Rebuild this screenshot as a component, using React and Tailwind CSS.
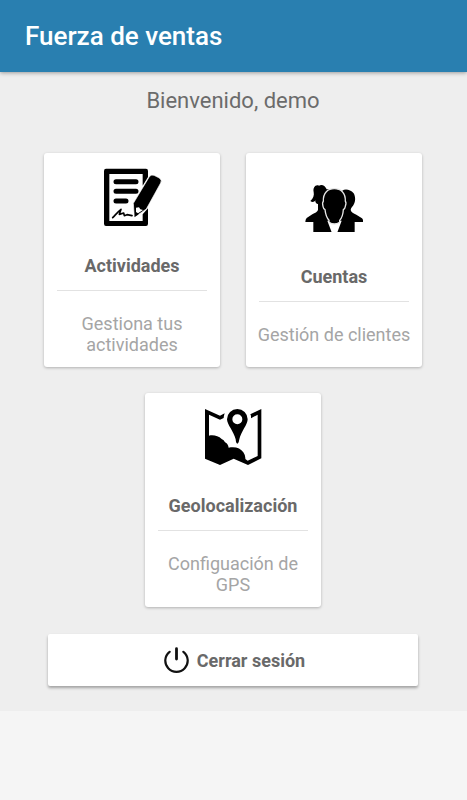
import React from "react";

function ActivityIcon() {
  return (
    <svg className="ml-px h-[58px] w-[58px]" viewBox="42 39 174 174">
      <path
        fillRule="evenodd"
        d="M48 41H168Q174 41 174 48V66L158 92V57H58V198H158V178L174 160V206Q174 213 168 213H48Q42 213 42 206V48Q42 41 48 41Z"
      />
      <g fill="none" stroke="#000" strokeLinecap="round">
        <path strokeWidth="15" d="M78 80H138M78 109H138M78 138H108" />
        <path
          strokeWidth="5"
          strokeLinejoin="round"
          d="M68 188C76 180 84 170 93 163L88 178L101 174L103 182L111 179L126 182"
        />
      </g>
      <path
        d="M178 65Q183 58 192 61L208 69Q217 75 212 84L169 162L133 187L130 145Z"
        stroke="#fff"
        strokeWidth="2"
      />
      <path fill="#fff" d="M138 158L147 157L151 163L159 165L144 175L138 171Z" />
      <path d="M135 173L146 178L134 186Z" />
    </svg>
  );
}

function AccountsIcon() {
  return (
    <svg className="h-[60px] w-[58px]" viewBox="38 21 174 180">
      <path d="M103 58C98 46 88 42 80 47C70 42 61 52 64 66C66 76 63 86 54 93C60 98 66 96 69 91C68 97 72 102 77 102V120C75 126 68 129 60 133L43 144Q39 148 39 156H63V186H125V58Z" />
      <path d="M150 62C158 56 174 58 184 70C190 80 190 96 183 106C179 112 176 113 175 120C176 127 184 130 192 134L209 145Q213 149 213 156H187V186H125V62Z" />
      <path fill="#fff" d="M105 152L118 187H135L148 152Z" />
      <path
        d="M126 56C145 56 160 68 159 94Q163 98 159 109Q158 116 153 119C152 136 148 144 142 151V157Q126 167 110 157V151C103 144 100 136 98 119Q93 116 92 109Q89 98 93 94C92 68 107 56 126 56Z"
        stroke="#e6e6e6"
        strokeWidth="4"
      />
    </svg>
  );
}

function MapIcon() {
  return (
    <svg className="ml-px h-[58px] w-[58px]" viewBox="38 37 174 174">
      <path d="M38 40L83 60L97 53Q94 62 94 67L83 72L50 57V120C64 117 78 121 88 130Q95 132 98 140Q107 144 109 156C128 152 145 157 153 170Q160 180 159 190L166 195L196 181V57L176 68V60L174 56L207 40V188L167 208L124 189L83 208L38 189Z" />
      <path
        fillRule="evenodd"
        d="M135 40A31 31 0 0 1 166 71C166 87 146 108 141 131Q139 144 135 144Q131 144 130 131C125 108 104 87 104 71A31 31 0 0 1 135 40ZM135 56A15 15 0 1 0 135 86A15 15 0 1 0 135 56Z"
      />
    </svg>
  );
}

function PowerIcon() {
  return (
    <svg
      className="h-[26px] w-[25px]"
      viewBox="0 0 25 26"
      fill="none"
      stroke="#111"
      strokeLinecap="round"
    >
      <path strokeWidth="2.2" d="M5.6 4.8A11.2 11.2 0 1 0 19.4 4.8" />
      <path strokeWidth="2.8" d="M12.5 1.7V12" />
    </svg>
  );
}

function MenuCard({ icon, title, description }) {
  return (
    <button className="flex h-[214px] w-[176px] flex-col items-center justify-center rounded-[3px] bg-white px-3 pt-1 shadow-[0_1px_3px_rgba(0,0,0,0.26)]">
      {icon}
      <span className="mt-[29px] text-[18px] leading-[21px] font-bold text-[#696969]">
        {title}
      </span>
      <span className="mt-[14px] h-px w-[150px] bg-[#e2e2e2]" />
      <span className="-mx-2 mt-[22px] mb-px text-[18px] leading-[21.5px] text-[#a5a5a5]">
        {description}
      </span>
    </button>
  );
}

export default function App() {
  return (
    <div className="flex h-[800px] w-[467px] flex-col bg-[#f5f5f5] font-['Roboto',sans-serif]">
      <header className="z-10 flex h-[72px] shrink-0 items-center bg-[#297fb0] pl-[25px] shadow-[0_1px_4px_rgba(0,0,0,0.35)]">
        <h1 className="text-[26px] font-medium text-white">Fuerza de ventas</h1>
      </header>

      <main className="flex h-[639px] flex-col items-center bg-[#eeeeee] pr-px">
        <p className="mt-4 text-[22px] leading-[26px] text-[#6b6b6b]">
          Bienvenido, demo
        </p>

        <div className="mt-[39px] flex gap-[26px]">
          <MenuCard
            icon={<ActivityIcon />}
            title="Actividades"
            description={
              <>
                Gestiona tus
                <br />
                actividades
              </>
            }
          />
          <MenuCard
            icon={<AccountsIcon />}
            title="Cuentas"
            description="Gestión de clientes"
          />
        </div>

        <div className="mt-[26px]">
          <MenuCard
            icon={<MapIcon />}
            title="Geolocalización"
            description={
              <>
                Configuación de
                <br />
                GPS
              </>
            }
          />
        </div>

        <button className="mt-[27px] flex h-[52px] w-[370px] items-center justify-center gap-2 rounded-[2px] bg-white pl-[3px] shadow-[0_2px_3px_rgba(0,0,0,0.32)]">
          <PowerIcon />
          <span className="text-[18px] font-bold text-[#696969]">
            Cerrar sesión
          </span>
        </button>
      </main>
    </div>
  );
}
